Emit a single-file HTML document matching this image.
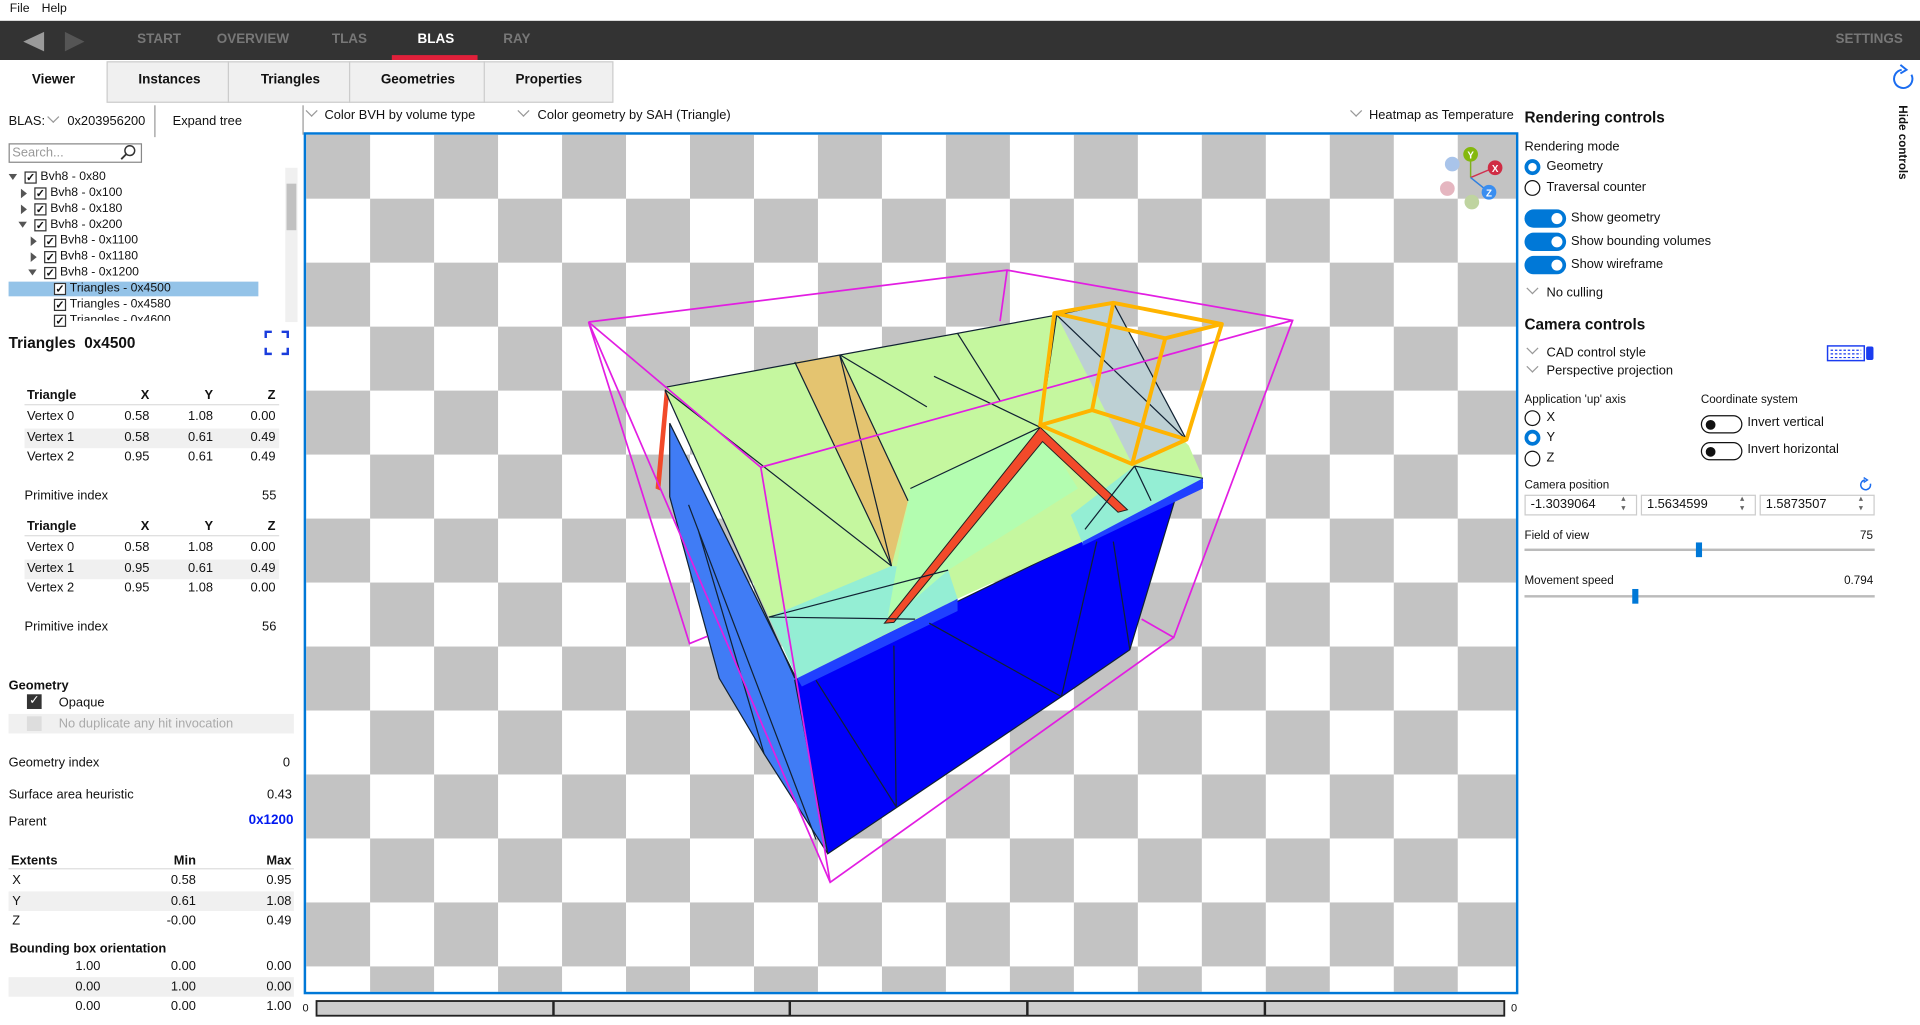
<!DOCTYPE html>
<html><head><meta charset="utf-8">
<style>
*{margin:0;padding:0;box-sizing:border-box}
html,body{width:1920px;height:1024px;overflow:hidden;background:#fff}
#w{position:absolute;left:0;top:0;width:1568px;height:837px;transform:scale(1.22449);transform-origin:0 0;font-family:"Liberation Sans",sans-serif;font-size:10.5px;color:#111}
.a{position:absolute;white-space:nowrap}
.b{font-weight:bold}
.r{text-align:right}
.cb{position:absolute;width:10px;height:10px;border:1px solid #333;background:#fff;font-size:9px;line-height:8px;text-align:center;font-weight:bold}
.tri{position:absolute;width:0;height:0}
.rad{position:absolute;width:13px;height:13px;border-radius:50%;border:1.5px solid #111;background:#fff}
.rad.on{border:3.5px solid #0078d7}
.tg{position:absolute;width:34px;height:15px;border-radius:8px;background:#0078d7}
.tg:after{content:"";position:absolute;right:3px;top:3px;width:9px;height:9px;border-radius:50%;background:#fff}
.tgo{position:absolute;width:34px;height:15px;border-radius:8px;border:1.5px solid #111;background:#fff}
.tgo:after{content:"";position:absolute;left:3px;top:2.5px;width:8px;height:8px;border-radius:50%;background:#111}
.chev{position:absolute;width:7px;height:7px;border-right:1.5px solid #999;border-bottom:1.5px solid #999;transform:rotate(45deg)}
.row{position:absolute;left:7px;width:233px;height:16px}
.g{background:#f0f0f0}
</style></head><body><div id="w">
<!-- menu -->
<div class="a" style="left:8px;top:2px;font-size:10px">File</div>
<div class="a" style="left:34px;top:2px;font-size:10px">Help</div>
<div class="a" style="left:0;top:17px;width:1568px;height:32px;background:#333"></div>
<svg class="a" style="left:16px;top:24px" width="60" height="20"><polygon points="3,10 20,2 20,18" fill="#9a9a9a"/><polygon points="53,10 37,2 37,18" fill="#555"/></svg>
<div class="a b" style="left:112px;top:26px;font-size:11px;color:#777">START</div>
<div class="a b" style="left:177px;top:26px;font-size:11px;color:#777">OVERVIEW</div>
<div class="a b" style="left:271px;top:26px;font-size:11px;color:#777">TLAS</div>
<div class="a b" style="left:341px;top:26px;font-size:11px;color:#fff">BLAS</div>
<div class="a" style="left:320px;top:45px;width:70px;height:4px;background:#e0203a"></div>
<div class="a b" style="left:411px;top:26px;font-size:11px;color:#777">RAY</div>
<div class="a b" style="left:1499px;top:26px;font-size:11px;color:#777">SETTINGS</div>
<!-- tabs -->
<div class="a" style="left:87px;top:50px;width:414px;height:34px;background:#f0f0f0;border:1px solid #ccc"></div>
<div class="a" style="left:186px;top:50px;width:1px;height:34px;background:#ccc"></div>
<div class="a" style="left:285px;top:50px;width:1px;height:34px;background:#ccc"></div>
<div class="a" style="left:395px;top:50px;width:1px;height:34px;background:#ccc"></div>
<div class="a b" style="left:26px;top:59px;font-size:11px">Viewer</div>
<div class="a b" style="left:113px;top:59px;font-size:11px">Instances</div>
<div class="a b" style="left:213px;top:59px;font-size:11px">Triangles</div>
<div class="a b" style="left:311px;top:59px;font-size:11px">Geometries</div>
<div class="a b" style="left:421px;top:59px;font-size:11px">Properties</div>
<!-- left panel -->
<div class="a" style="left:7px;top:93px">BLAS:</div>
<div class="chev" style="left:40px;top:92px"></div>
<div class="a" style="left:55px;top:93px">0x203956200</div>
<div class="a" style="left:126px;top:86px;width:1px;height:26px;background:#999"></div>
<div class="a" style="left:141px;top:93px">Expand tree</div>
<div class="a" style="left:7px;top:117px;width:109px;height:16px;border:1px solid #888"></div>
<div class="a" style="left:10px;top:119px;color:#999">Search...</div>
<svg class="a" style="left:97px;top:117px" width="16" height="16"><circle cx="9" cy="6" r="4" fill="none" stroke="#333" stroke-width="1.2"/><line x1="6" y1="9" x2="2" y2="13" stroke="#333" stroke-width="1.5"/></svg>
<div class="a" style="left:233px;top:137px;width:10px;height:126px;background:#f0f0f0"></div>
<div class="a" style="left:234px;top:150px;width:8px;height:38px;background:#c1c1c1"></div>
<div class="a" style="left:7px;top:230px;width:204px;height:12px;background:#94c3e8"></div>
<div id="tree"></div>
<div class="a b" style="left:7px;top:273px;font-size:12.5px">Triangles&nbsp;&nbsp;0x4500</div>
<svg class="a" style="left:215px;top:269px" width="22" height="22"><path d="M2 7V2h5M15 2h5v5M20 15v5h-5M7 20H2v-5" fill="none" stroke="#1a3cdc" stroke-width="2"/></svg>
<div id="tables"></div>
<div class="a b" style="left:7px;top:554px">Geometry</div>
<div class="a" style="left:22px;top:567px;width:12px;height:12px;background:#333;color:#fff;font-size:10px;line-height:12px;text-align:center">✓</div>
<div class="a" style="left:48px;top:568px">Opaque</div>
<div class="row g" style="top:583px"></div>
<div class="a" style="left:22px;top:585px;width:12px;height:12px;background:#ddd"></div>
<div class="a" style="left:48px;top:585px;color:#aaa">No duplicate any hit invocation</div>
<div class="a" style="left:7px;top:617px">Geometry index</div><div class="a" style="left:231px;top:617px">0</div>
<div class="a" style="left:7px;top:643px">Surface area heuristic</div><div class="a" style="left:218px;top:643px">0.43</div>
<div class="a" style="left:7px;top:665px">Parent</div><div class="a b" style="left:203px;top:664px;color:#0018f0;font-size:11px">0x1200</div>
<!-- viewport header -->
<div class="a" style="left:247px;top:86px;width:1px;height:24px;background:#999"></div>
<div class="chev" style="left:251px;top:87px"></div><div class="a" style="left:265px;top:88px">Color BVH by volume type</div>
<div class="chev" style="left:424px;top:87px"></div><div class="a" style="left:439px;top:88px">Color geometry by SAH (Triangle)</div>
<div class="chev" style="left:1104px;top:87px"></div><div class="a" style="left:1118px;top:88px">Heatmap as Temperature</div>
<!-- viewport -->
<div class="a" style="left:248px;top:108px;width:992px;height:704px;border:2px solid #0078d7;background:conic-gradient(#fff 0 25%,#c3c3c3 0 50%,#fff 0 75%,#c3c3c3 0) 0 0/104.5px 104.5px"></div>
<svg class="a" style="left:0;top:0" width="1568" height="837">
<g transform="translate(473.7,212.3) scale(0.3854,0.3333)">
<polygon points="190,400 460,1030 525,1455 390,1210 295,1025 190,580" fill="#407cf5" stroke="#123" stroke-width="1" vector-effect="non-scaling-stroke"/>
<polygon points="455,1030 1320,545 1260,590 1165,955 1020,1070 525,1455" fill="#0000fa" stroke="#123" stroke-width="1" vector-effect="non-scaling-stroke"/>
<polygon points="180,312 1010,135 1290,455 1320,535 1065,690 800,830 460,1025 400,875 180,320" fill="#c5f79f"/>
<polygon points="400,875 660,750 780,760 800,830 710,880 460,1025" fill="#94eed4"/>
<polygon points="1040,625 1175,505 1320,535 1065,695" fill="#94eed4"/>
<polygon points="700,560 975,410 1055,560 780,760 650,890" fill="#b3fdb0"/>
<polygon points="455,250 550,232 695,590 660,750" fill="#e4c470"/>
<polygon points="1010,135 1130,105 1285,440 1170,500" fill="#bdd0d4"/>
<polygon points="460,1025 800,830 800,860 470,1045" fill="#2040ff"/>
<polygon points="1065,690 1320,535 1320,560 1065,700" fill="#2040ff"/>
<polygon points="645,890 975,410 1160,612 1140,618 980,445 665,888" fill="#f24a2a" stroke="#222" stroke-width="0.8" vector-effect="non-scaling-stroke"/>
<polygon points="180,315 160,560 170,565 188,335" fill="#f24a2a"/>
<g stroke="#123" stroke-width="1" fill="none" vector-effect="non-scaling-stroke">
<path vector-effect="non-scaling-stroke" d="M180,312 L1010,135 M180,320 L455,1025 M400,875 L780,760 M180,318 L660,750 M455,250 L660,750 M550,232 L695,590 M550,232 L660,750 M550,232 L735,360 M750,285 L975,410 M800,180 L890,345 M700,560 L975,410 M975,410 L1010,135 M1010,135 L1285,440 M1010,135 L1130,105 L1285,440 M1175,505 L1320,535 M1175,505 L1070,660 M1175,505 L1210,590 M400,875 L710,880 M1130,690 L1165,955 M1095,690 L1020,1070 M500,1030 L670,1340 M665,945 L670,1340 M740,890 L1020,1070 M250,660 L390,1210 M230,600 L500,1420"/>
</g>
<g stroke="#e21ee2" stroke-width="1.4" fill="none">
<path vector-effect="non-scaling-stroke" d="M18,152 L905,25 L1510,148 L1258,925 L530,1525 L18,152 L383,508 L1510,148 M383,508 L530,1525 M905,25 L890,150 M18,152 L232,940 L270,922 M1190,880 L1258,925"/>
</g>
<g stroke="#ffb400" stroke-width="3.2" fill="none" stroke-linejoin="round">
<path vector-effect="non-scaling-stroke" d="M1005,130 L1130,105 L1360,157 L1240,192 Z M975,405 L1085,368 L1285,440 L1170,500 Z M1005,130 L975,405 M1130,105 L1085,368 M1360,157 L1285,440 M1240,192 L1170,500"/>
</g>
</g>
<!-- gizmo -->
<g transform="translate(0,0)">
<circle cx="1186" cy="134" r="6" fill="#a9c4ea"/><circle cx="1182" cy="154" r="6" fill="#e5b6c0"/><circle cx="1202" cy="165" r="6" fill="#bfd4a0"/>
<line x1="1201" y1="145" x2="1201" y2="127" stroke="#80b020" stroke-width="1.2"/>
<line x1="1201" y1="145" x2="1220" y2="137" stroke="#d03050" stroke-width="1.2"/>
<line x1="1201" y1="145" x2="1216" y2="157" stroke="#3080e0" stroke-width="1.2"/>
<circle cx="1201" cy="126" r="6" fill="#84b80e"/><text x="1201" y="129.5" font-size="8" fill="#fff" text-anchor="middle" font-family="Liberation Sans" font-weight="bold">Y</text>
<circle cx="1221" cy="137" r="6" fill="#d02c44"/><text x="1221" y="140.5" font-size="8" fill="#fff" text-anchor="middle" font-family="Liberation Sans" font-weight="bold">X</text>
<circle cx="1216" cy="157" r="6" fill="#3a8ef0"/><text x="1216" y="160.5" font-size="8" fill="#fff" text-anchor="middle" font-family="Liberation Sans" font-weight="bold">Z</text>
</g>
<!-- bottom bar -->
<rect x="258.5" y="817.5" width="970" height="12" fill="#ccc" stroke="#222" stroke-width="1.5"/>
<path d="M452,818v12M645,818v12M839,818v12M1033,818v12" stroke="#222" stroke-width="2"/>
<!-- keyboard -->
<rect x="1492.5" y="282.5" width="30" height="12" fill="none" stroke="#1a3cf0" stroke-width="1.2"/>
<path d="M1495,286h25M1495,289h25M1495,292h25" stroke="#1a3cf0" stroke-width="1" stroke-dasharray="2 1.5"/>
<rect x="1524" y="283" width="6" height="11" rx="1.5" fill="#1a3cf0"/>
<!-- refresh icons -->
<path d="M1561,61 A7.5,7.5 0 1 1 1553,57" fill="none" stroke="#1a6cf0" stroke-width="1.6"/><path d="M1552,53 l5,4 -5,3" fill="none" stroke="#1a6cf0" stroke-width="1.6"/>
<path d="M1527.5,395 A4,4 0 1 1 1523,392" fill="none" stroke="#1a6cf0" stroke-width="1.2"/><path d="M1522,390 l3,2 -3,2" fill="none" stroke="#1a6cf0" stroke-width="1.2"/>
</svg>
<div class="a" style="left:247px;top:818px;font-size:9px">0</div>
<div class="a" style="left:1234px;top:818px;font-size:9px">0</div>
<!-- right panel -->
<div class="a b" style="left:1245px;top:89px;font-size:12.5px">Rendering controls</div>
<div class="a" style="left:1245px;top:114px">Rendering mode</div>
<div class="rad on" style="left:1245px;top:130px"></div><div class="a" style="left:1263px;top:130px">Geometry</div>
<div class="rad" style="left:1245px;top:147px"></div><div class="a" style="left:1263px;top:147px">Traversal counter</div>
<div class="tg" style="left:1245px;top:171px"></div><div class="a" style="left:1283px;top:172px">Show geometry</div>
<div class="tg" style="left:1245px;top:190px"></div><div class="a" style="left:1283px;top:191px">Show bounding volumes</div>
<div class="tg" style="left:1245px;top:209px"></div><div class="a" style="left:1283px;top:210px">Show wireframe</div>
<div class="chev" style="left:1248px;top:232px"></div><div class="a" style="left:1263px;top:233px">No culling</div>
<div class="a b" style="left:1245px;top:258px;font-size:12.5px">Camera controls</div>
<div class="chev" style="left:1248px;top:281px"></div><div class="a" style="left:1263px;top:282px">CAD control style</div>
<div class="chev" style="left:1248px;top:296px"></div><div class="a" style="left:1263px;top:297px">Perspective projection</div>
<div class="a" style="left:1245px;top:321px;font-size:9.5px">Application 'up' axis</div>
<div class="a" style="left:1389px;top:321px;font-size:9.5px">Coordinate system</div>
<div class="rad" style="left:1245px;top:335px"></div><div class="a" style="left:1263px;top:335px">X</div>
<div class="rad on" style="left:1245px;top:351px"></div><div class="a" style="left:1263px;top:351px">Y</div>
<div class="rad" style="left:1245px;top:368px"></div><div class="a" style="left:1263px;top:368px">Z</div>
<div class="tgo" style="left:1389px;top:339px"></div><div class="a" style="left:1427px;top:339px">Invert vertical</div>
<div class="tgo" style="left:1389px;top:361px"></div><div class="a" style="left:1427px;top:361px">Invert horizontal</div>
<div class="a" style="left:1245px;top:391px;font-size:9.5px">Camera position</div>
<div class="a" style="left:1245px;top:404px;width:92px;height:17px;border:1px solid #ccc"></div><div class="a" style="left:1250px;top:406px">-1.3039064</div><div class="a" style="left:1324px;top:404px;font-size:7px;color:#666;line-height:8px">▴<br>▾</div>
<div class="a" style="left:1340px;top:404px;width:94px;height:17px;border:1px solid #ccc"></div><div class="a" style="left:1345px;top:406px">1.5634599</div><div class="a" style="left:1421px;top:404px;font-size:7px;color:#666;line-height:8px">▴<br>▾</div>
<div class="a" style="left:1437px;top:404px;width:94px;height:17px;border:1px solid #ccc"></div><div class="a" style="left:1442px;top:406px">1.5873507</div><div class="a" style="left:1518px;top:404px;font-size:7px;color:#666;line-height:8px">▴<br>▾</div>
<div class="a" style="left:1245px;top:432px;font-size:9.5px">Field of view</div><div class="a" style="left:1519px;top:432px;font-size:9.5px">75</div>
<div class="a" style="left:1245px;top:448px;width:286px;height:2px;background:#bbb"></div>
<div class="a" style="left:1385px;top:443px;width:5px;height:12px;background:#0078d7"></div>
<div class="a" style="left:1245px;top:469px;font-size:9.5px">Movement speed</div><div class="a" style="left:1506px;top:469px;font-size:9.5px">0.794</div>
<div class="a" style="left:1245px;top:486px;width:286px;height:2px;background:#bbb"></div>
<div class="a" style="left:1333px;top:481px;width:5px;height:12px;background:#0078d7"></div>
<div class="a b" style="left:1547px;top:86px;font-size:9.5px;transform:rotate(90deg);transform-origin:0 0;left:1559px">Hide controls</div>
<script>
var t='';
var rows=[[0,1,'Bvh8 - 0x80',145],[1,0,'Bvh8 - 0x100',158],[1,0,'Bvh8 - 0x180',171],[1,1,'Bvh8 - 0x200',184],[2,0,'Bvh8 - 0x1100',197],[2,0,'Bvh8 - 0x1180',210],[2,1,'Bvh8 - 0x1200',223],[3,-1,'Triangles - 0x4500',236],[3,-1,'Triangles - 0x4580',249],[3,-1,'Triangles - 0x4600',262]];
rows.forEach(function(r){var x=11+r[0]*8;
if(r[1]==1)t+='<svg class="a" style="left:'+(x-4)+'px;top:'+(r[3]-3)+'px" width="8" height="6"><polygon points="0,0 7,0 3.5,5" fill="#555"/></svg>';
if(r[1]==0)t+='<svg class="a" style="left:'+(x-2)+'px;top:'+(r[3]-4)+'px" width="6" height="8"><polygon points="0,0 5,4 0,8" fill="#555"/></svg>';
t+='<div class="cb" style="left:'+(x+9)+'px;top:'+(r[3]-5)+'px">✓</div>';
var clip=r[3]>255?'height:6px;overflow:hidden;':'';
t+='<div class="a" style="left:'+(x+22)+'px;top:'+(r[3]-6)+'px;font-size:10px;'+clip+'">'+r[2]+'</div>';});
document.getElementById('tree').innerHTML=t;
var s='';
function tbl(y,vals,prim){
s+='<div class="a b" style="left:22px;top:'+(y-6)+'px">Triangle</div><div class="a b r" style="left:100px;width:22px;top:'+(y-6)+'px">X</div><div class="a b r" style="left:150px;width:24px;top:'+(y-6)+'px">Y</div><div class="a b r" style="left:200px;width:25px;top:'+(y-6)+'px">Z</div>';
s+='<div class="a" style="left:20px;top:'+(y+7)+'px;width:208px;height:1px;background:#ddd"></div>';
vals.forEach(function(v,i){var yy=y+17+i*16.5;
if(i==1)s+='<div class="a g" style="left:20px;top:'+(yy-7)+'px;width:208px;height:16px"></div>';
s+='<div class="a" style="left:22px;top:'+(yy-6)+'px">Vertex '+i+'</div>';
[122,174,225].forEach(function(x,j){s+='<div class="a r" style="left:'+(x-40)+'px;width:40px;top:'+(yy-6)+'px">'+v[j]+'</div>';});});
s+='<div class="a" style="left:20px;top:'+(y+76)+'px">Primitive index</div><div class="a" style="left:214px;top:'+(y+76)+'px">'+prim+'</div>';}
tbl(323,[['0.58','1.08','0.00'],['0.58','0.61','0.49'],['0.95','0.61','0.49']],55);
tbl(430,[['0.58','1.08','0.00'],['0.95','0.61','0.49'],['0.95','1.08','0.00']],56);
s+='<div class="a b" style="left:9px;top:697px">Extents</div><div class="a b r" style="left:120px;width:40px;top:697px">Min</div><div class="a b r" style="left:198px;width:40px;top:697px">Max</div>';
s+='<div class="a" style="left:7px;top:709px;width:233px;height:1px;background:#ddd"></div>';
[['X','0.58','0.95'],['Y','0.61','1.08'],['Z','-0.00','0.49']].forEach(function(v,i){var yy=719+i*16.5;
if(i==1)s+='<div class="row g" style="top:'+(yy-8)+'px"></div>';
s+='<div class="a" style="left:10px;top:'+(yy-6)+'px">'+v[0]+'</div><div class="a r" style="left:110px;width:50px;top:'+(yy-6)+'px">'+v[1]+'</div><div class="a r" style="left:188px;width:50px;top:'+(yy-6)+'px">'+v[2]+'</div>';});
s+='<div class="a b" style="left:8px;top:769px">Bounding box orientation</div>';
[['1.00','0.00','0.00'],['0.00','1.00','0.00'],['0.00','0.00','1.00']].forEach(function(v,i){var yy=789+i*16.5;
if(i==1)s+='<div class="row g" style="top:'+(yy-8)+'px"></div>';
[82,160,238].forEach(function(x,j){s+='<div class="a r" style="left:'+(x-50)+'px;width:50px;top:'+(yy-6)+'px">'+v[j]+'</div>';});});
document.getElementById('tables').innerHTML=s;
</script>
</div></body></html>
